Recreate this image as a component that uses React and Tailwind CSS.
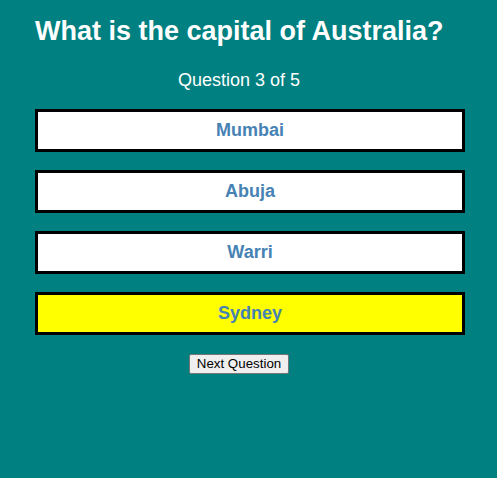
const options = ["Mumbai", "Abuja", "Warri", "Sydney"];

function App() {
    const picked = "Sydney";

    return (
        <div className="min-h-screen w-full bg-[#008080] pt-[15px] pl-[35px] font-['Liberation_Sans',Arial,sans-serif]">
            {/* Title */}
            <h1 className="text-white text-[27px] leading-[32px] font-bold whitespace-nowrap">
                What is the capital of Australia?
            </h1>

            {/* Counter */}
            <p className="w-[408px] mt-[22px] text-center text-white text-[18px] leading-[22px]">
                Question 3 of 5
            </p>

            {/* Answers */}
            <div className="mt-[18px] flex flex-col gap-[18px] w-[430px]">
                {options.map((o) => (
                    <div
                        key={o}
                        className={
                            o === picked
                                ? "h-[43px] flex items-center justify-center border-[3px] border-black bg-[#ffff00] text-[#4682b4] text-[18px] font-bold"
                                : "h-[43px] flex items-center justify-center border-[3px] border-black bg-white text-[#4682b4] text-[18px] font-bold"
                        }
                    >
                        {o}
                    </div>
                ))}
            </div>

            {/* Next */}
            <div className="w-[408px] mt-[19px] flex justify-center">
                <button className="h-[20px] w-[100px] flex items-center justify-center bg-[#efefef] border border-[#767676] rounded-[2px] text-black text-[13.33px] leading-none font-['Liberation_Sans',Arial,sans-serif]">
                    Next Question
                </button>
            </div>
        </div>
    );
}

export default App;
